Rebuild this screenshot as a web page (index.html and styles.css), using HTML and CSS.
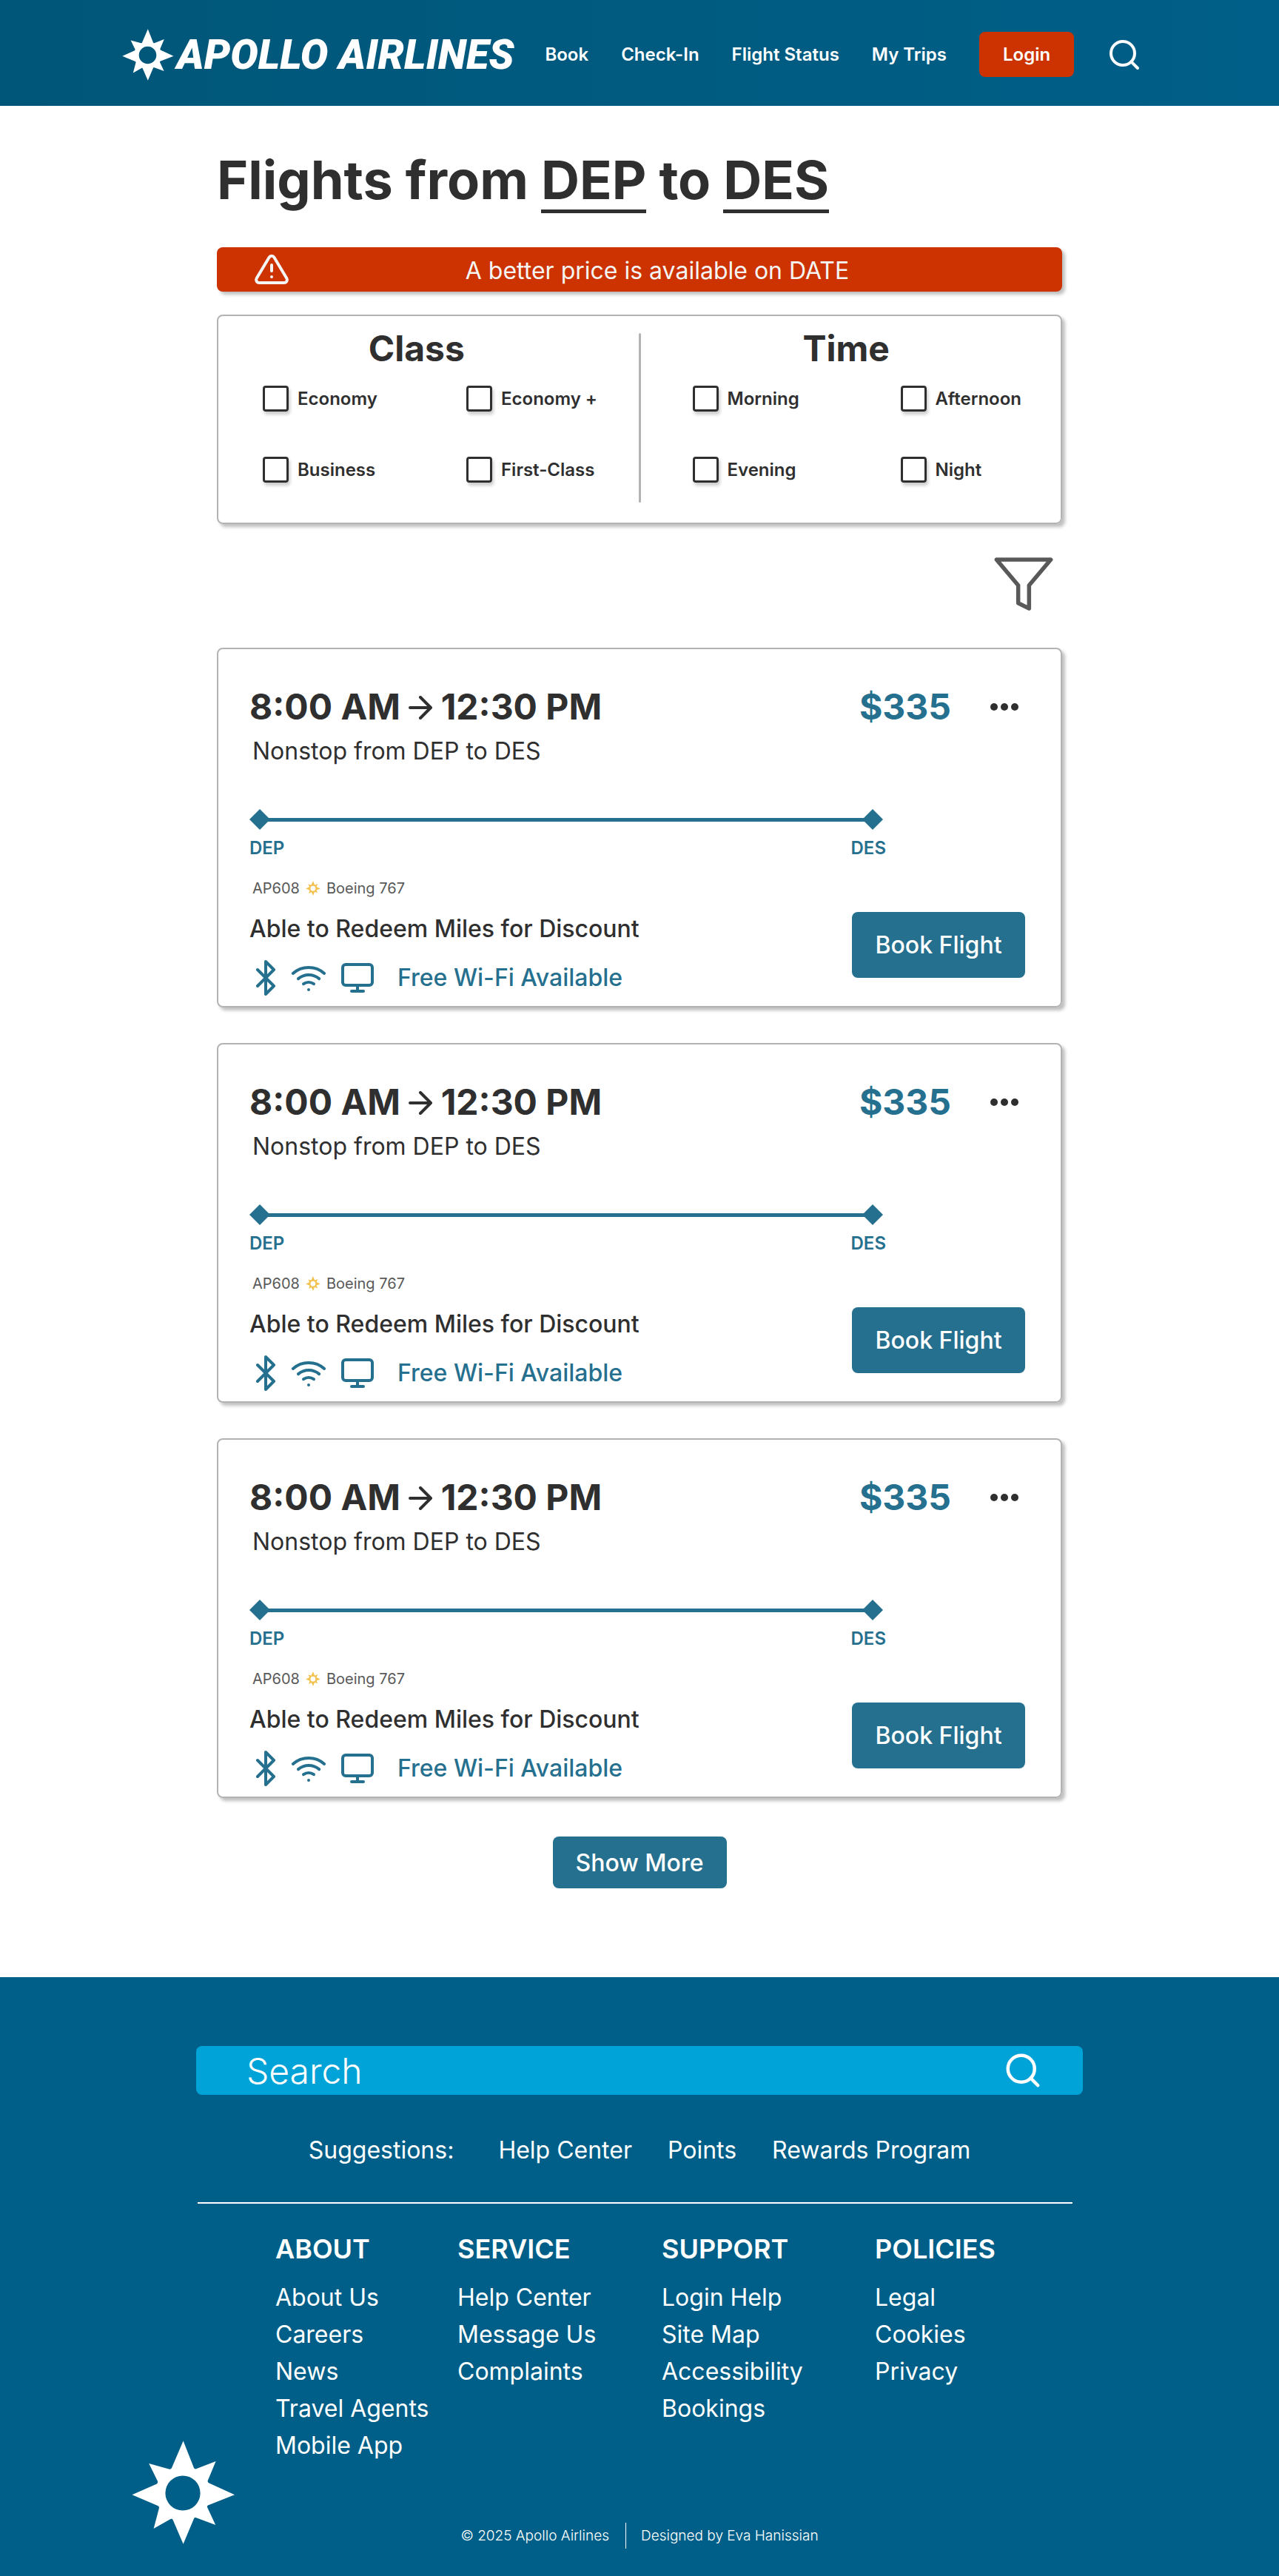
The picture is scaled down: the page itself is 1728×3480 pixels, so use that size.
FILE: index.html
```html
<!DOCTYPE html>
<html lang="en">

<head>
    <meta charset="UTF-8">
    <meta name="viewport" content="width=device-width, initial-scale=1.0">
    <title>Apollo Airlines - Flights</title>
    <link rel="stylesheet" href="styles.css">
</head>

<body>
    <!-- shared icons -->
    <svg class="sprite" aria-hidden="true">
        <symbol id="star" viewBox="0 0 140 140">
            <path fill="currentColor" fill-rule="evenodd" d="M69.6 0.5L84 37Q85 39 87 38.3L113.6 28L102.8 54Q102 56.5 104.5 57.5L139 73.3L103 87.5Q101.5 88.5 102 90L113.2 114L87 104.3Q85 103.5 84 105.5L69.6 139.7L55.5 107Q54.5 105 52.5 106L29.6 119L37 91Q37 89 35.5 88.2L0.5 73.3L34 58.5Q35.5 57 35 55L23.2 31L51 38.7Q53 39 54 37ZM69 47.4A23.6 23.6 0 1 0 69 94.6A23.6 23.6 0 1 0 69 47.4Z" />
        </symbol>
        <symbol id="search" viewBox="0 0 24 24">
            <circle cx="11" cy="11" r="8" />
            <path d="M21 21l-4.35-4.35" />
        </symbol>
        <symbol id="arrow" viewBox="4 4 16 16">
            <path d="M5 12h14M12 5l7 7-7 7" />
        </symbol>
        <symbol id="bluetooth" viewBox="5 0 14 24">
            <path d="M6.5 6.5l11 11L12 23V1l5.5 5.5-11 11" />
        </symbol>
        <symbol id="wifi" viewBox="0 0 24 24">
            <path d="M5 12.55a11 11 0 0 1 14.08 0M1.42 9a16 16 0 0 1 21.16 0M8.53 16.11a6 6 0 0 1 6.95 0M12 20h.01" />
        </symbol>
        <symbol id="monitor" viewBox="1 0 22 24">
            <rect x="2" y="3" width="20" height="14" rx="2" />
            <path d="M8 21h8M12 17v4" />
        </symbol>
    </svg>

    <header class="header">
        <a class="logo" href="#">
            <svg class="logo-star">
                <use href="#star" />
            </svg>
            <span>APOLLO AIRLINES</span>
        </a>
        <nav class="nav">
            <a href="#">Book</a>
            <a href="#">Check-In</a>
            <a href="#">Flight Status</a>
            <a href="#">My Trips</a>
            <button class="login" type="button">Login</button>
            <button class="icon-btn" type="button" aria-label="Search">
                <svg class="icon">
                    <use href="#search" />
                </svg>
            </button>
        </nav>
    </header>

    <main class="main">
        <h1 class="title">Flights from <span>DEP</span> to <span>DES</span></h1>

        <div class="alert">
            <svg class="icon" viewBox="0 0 24 24">
                <path d="M10.29 3.86L1.82 18a2 2 0 0 0 1.71 3h16.94a2 2 0 0 0 1.71-3L13.71 3.86a2 2 0 0 0-3.42 0zM12 9v4M12 17h.01" />
            </svg>
            <p>A better price is available on DATE</p>
        </div>

        <form class="filters">
            <section class="group class-group">
                <h2>Class</h2>
                <div class="options">
                    <label><input type="checkbox">Economy</label>
                    <label><input type="checkbox">Economy +</label>
                    <label><input type="checkbox">Business</label>
                    <label><input type="checkbox">First-Class</label>
                </div>
            </section>
            <div class="divider"></div>
            <section class="group time-group">
                <h2>Time</h2>
                <div class="options">
                    <label><input type="checkbox">Morning</label>
                    <label><input type="checkbox">Afternoon</label>
                    <label><input type="checkbox">Evening</label>
                    <label><input type="checkbox">Night</label>
                </div>
            </section>
        </form>

        <button class="icon-btn filter-btn" type="button" aria-label="Filter">
            <svg class="filter-icon" viewBox="0 0 24 24">
                <path d="M22 3H2l8 9.46V19l4 2v-8.54L22 3z" />
            </svg>
        </button>

        <div class="flights">
            <article class="flight">
                <div class="flight-head">
                    <h3 class="times">8:00 AM <svg class="arrow"><use href="#arrow" /></svg> 12:30 PM</h3>
                    <span class="price">$335</span>
                    <button class="more" type="button" aria-label="More options"><i></i><i></i><i></i></button>
                </div>
                <p class="stops">Nonstop from DEP to DES</p>
                <div class="route"></div>
                <div class="route-labels"><span>DEP</span><span>DES</span></div>
                <div class="plane">
                    <span>AP608</span>
                    <svg class="plane-star"><use href="#star" /></svg>
                    <span>Boeing 767</span>
                </div>
                <div class="flight-foot">
                    <div class="perks">
                        <p>Able to Redeem Miles for Discount</p>
                        <div class="amenities">
                            <svg class="icon bluetooth"><use href="#bluetooth" /></svg>
                            <svg class="icon"><use href="#wifi" /></svg>
                            <svg class="icon monitor"><use href="#monitor" /></svg>
                            <span>Free Wi-Fi Available</span>
                        </div>
                    </div>
                    <button class="btn book" type="button">Book Flight</button>
                </div>
            </article>

            <article class="flight">
                <div class="flight-head">
                    <h3 class="times">8:00 AM <svg class="arrow"><use href="#arrow" /></svg> 12:30 PM</h3>
                    <span class="price">$335</span>
                    <button class="more" type="button" aria-label="More options"><i></i><i></i><i></i></button>
                </div>
                <p class="stops">Nonstop from DEP to DES</p>
                <div class="route"></div>
                <div class="route-labels"><span>DEP</span><span>DES</span></div>
                <div class="plane">
                    <span>AP608</span>
                    <svg class="plane-star"><use href="#star" /></svg>
                    <span>Boeing 767</span>
                </div>
                <div class="flight-foot">
                    <div class="perks">
                        <p>Able to Redeem Miles for Discount</p>
                        <div class="amenities">
                            <svg class="icon bluetooth"><use href="#bluetooth" /></svg>
                            <svg class="icon"><use href="#wifi" /></svg>
                            <svg class="icon monitor"><use href="#monitor" /></svg>
                            <span>Free Wi-Fi Available</span>
                        </div>
                    </div>
                    <button class="btn book" type="button">Book Flight</button>
                </div>
            </article>

            <article class="flight">
                <div class="flight-head">
                    <h3 class="times">8:00 AM <svg class="arrow"><use href="#arrow" /></svg> 12:30 PM</h3>
                    <span class="price">$335</span>
                    <button class="more" type="button" aria-label="More options"><i></i><i></i><i></i></button>
                </div>
                <p class="stops">Nonstop from DEP to DES</p>
                <div class="route"></div>
                <div class="route-labels"><span>DEP</span><span>DES</span></div>
                <div class="plane">
                    <span>AP608</span>
                    <svg class="plane-star"><use href="#star" /></svg>
                    <span>Boeing 767</span>
                </div>
                <div class="flight-foot">
                    <div class="perks">
                        <p>Able to Redeem Miles for Discount</p>
                        <div class="amenities">
                            <svg class="icon bluetooth"><use href="#bluetooth" /></svg>
                            <svg class="icon"><use href="#wifi" /></svg>
                            <svg class="icon monitor"><use href="#monitor" /></svg>
                            <span>Free Wi-Fi Available</span>
                        </div>
                    </div>
                    <button class="btn book" type="button">Book Flight</button>
                </div>
            </article>
        </div>

        <button class="btn show-more" type="button">Show More</button>
    </main>

    <footer class="footer">
        <div class="footer-top">
            <form class="search">
                <input type="text" placeholder="Search" aria-label="Search">
                <button class="icon-btn" type="button" aria-label="Submit search">
                    <svg class="search-icon">
                        <use href="#search" />
                    </svg>
                </button>
            </form>
            <div class="suggestions">
                <span>Suggestions:</span>
                <a href="#">Help Center</a>
                <a href="#">Points</a>
                <a href="#">Rewards Program</a>
            </div>
            <hr>
        </div>
        <div class="footer-body">
            <svg class="footer-star">
                <use href="#star" />
            </svg>
            <div class="footer-content">
                <div class="links">
                    <div class="col">
                        <h4>ABOUT</h4>
                        <a href="#">About Us</a>
                        <a href="#">Careers</a>
                        <a href="#">News</a>
                        <a href="#">Travel Agents</a>
                        <a href="#">Mobile App</a>
                    </div>
                    <div class="col">
                        <h4>SERVICE</h4>
                        <a href="#">Help Center</a>
                        <a href="#">Message Us</a>
                        <a href="#">Complaints</a>
                    </div>
                    <div class="col">
                        <h4>SUPPORT</h4>
                        <a href="#">Login Help</a>
                        <a href="#">Site Map</a>
                        <a href="#">Accessibility</a>
                        <a href="#">Bookings</a>
                    </div>
                    <div class="col">
                        <h4>POLICIES</h4>
                        <a href="#">Legal</a>
                        <a href="#">Cookies</a>
                        <a href="#">Privacy</a>
                    </div>
                </div>
                <div class="copyright">
                    <span>© 2025 Apollo Airlines</span>
                    <span>Designed by Eva Hanissian</span>
                </div>
            </div>
        </div>
    </footer>
</body>

</html>
```
FILE: styles.css
```css
* {
    box-sizing: border-box;
}

body {
    margin: 0;
    font-family: Inter, "Liberation Sans", sans-serif;
    font-size: 32px;
    line-height: 38px;
    color: #2f2f2f;
    background-color: #fff;
}

h1,
h2,
h3,
h4,
p {
    margin: 0;
}

a {
    color: inherit;
    text-decoration: none;
}

button {
    border: none;
    padding: 0;
    font-family: inherit;
    color: inherit;
    cursor: pointer;
}

.sprite {
    display: none;
}

.icon,
.search-icon,
.arrow,
.filter-icon {
    width: 48px;
    height: 48px;
    fill: none;
    stroke: currentColor;
    stroke-width: 2;
    stroke-linecap: round;
    stroke-linejoin: round;
}

.icon-btn {
    display: flex;
    background: none;
}

/* header */
.header {
    display: flex;
    justify-content: center;
    align-items: center;
    gap: 42px;
    height: 143px;
    padding: 4px 20px 0 0;
    color: #fff;
    background: linear-gradient(90deg, #005678, #005f88);
}

.logo {
    display: flex;
    align-items: center;
    gap: 4px;
    font-family: Roboto, sans-serif;
    font-size: 56px;
    font-weight: 900;
    font-style: italic;
    white-space: nowrap;
}

.logo-star {
    width: 70px;
    height: 70px;
}

.nav {
    display: flex;
    align-items: center;
    gap: 44px;
    font-size: 24px;
    font-weight: 600;
    white-space: nowrap;
}

.login {
    height: 61px;
    padding: 0 32px;
    border-radius: 8px;
    font-size: 24px;
    font-weight: 600;
    background-color: #cc3300;
}

/* main */
.main {
    display: flex;
    flex-direction: column;
    max-width: 1142px;
    margin: 0 auto;
    padding: 60px 0 120px;
}

.title {
    font-size: 72px;
    line-height: 80px;
    font-weight: 700;
    margin-bottom: 46px;
}

.title span {
    display: inline-block;
    border-bottom: 5px solid #2f2f2f;
}

.alert {
    display: flex;
    align-items: center;
    height: 60px;
    padding: 0 50px;
    margin-bottom: 31px;
    border-radius: 8px;
    color: #f5f5f5;
    background-color: #cc3300;
    box-shadow: 4px 4px 4px rgba(0, 0, 0, 0.25);
}

.alert p {
    flex: 1;
    padding-top: 4px;
    text-align: center;
}

.filters {
    display: grid;
    grid-template-columns: minmax(0, 1fr) 3px minmax(0, 1fr);
    border: 2px solid #b3b3b3;
    border-radius: 8px;
    box-shadow: 4px 4px 4px rgba(0, 0, 0, 0.25);
}

.group {
    padding: 15px 32px 54px 0;
}

.time-group {
    padding-right: 12px;
}

.group h2 {
    margin-bottom: 21px;
    font-size: 48px;
    line-height: 58px;
    text-align: center;
}

.options {
    display: grid;
    grid-template-columns: 275px auto;
    row-gap: 61px;
    padding-left: 60px;
}

.time-group .options {
    grid-template-columns: 281px auto;
    padding-left: 70px;
}

.options label {
    display: flex;
    align-items: center;
    gap: 12px;
    font-size: 24px;
    line-height: 35px;
    font-weight: 600;
    white-space: nowrap;
}

.options input {
    appearance: none;
    width: 35px;
    height: 35px;
    margin: 0;
    border: 3px solid #2f2f2f;
    border-radius: 4px;
    box-shadow: 2px 4px 4px rgba(0, 0, 0, 0.2);
}

.options input:checked {
    background-color: #26708f;
}

.divider {
    margin: 23px 0 27px;
    border-radius: 2px;
    background-color: #b3b3b3;
}

.filter-btn {
    align-self: flex-end;
    margin: 37px 8px 42px 0;
    color: #595959;
}

.filter-icon {
    width: 88px;
    height: 88px;
    stroke-width: 1.5;
}

/* flight cards */
.flights {
    display: flex;
    flex-direction: column;
    gap: 48px;
}

.flight {
    padding: 49px 48px 14px 42px;
    border: 2px solid #b3b3b3;
    border-radius: 8px;
    box-shadow: 4px 4px 4px rgba(0, 0, 0, 0.25);
}

.flight-head {
    display: flex;
    align-items: center;
    font-size: 48px;
    line-height: 58px;
    font-weight: 700;
}

.times {
    flex: 1;
    font-size: inherit;
}

.arrow {
    width: 32px;
    height: 32px;
}

.price {
    margin-right: 44px;
    color: #26708f;
}

.more {
    display: flex;
    justify-content: center;
    gap: 4px;
    width: 56px;
    background: none;
}

.more i {
    width: 10px;
    height: 10px;
    border-radius: 50%;
    background-color: #2f2f2f;
}

.stops {
    margin-top: 12px;
    padding-left: 4px;
}

/* line with a diamond on each end */
.route {
    display: flex;
    align-items: center;
    justify-content: space-between;
    height: 30px;
    margin: 58px 192px 9px 0;
    background: linear-gradient(#26708f, #26708f) center / calc(100% - 20px) 5px no-repeat;
}

.route::before,
.route::after {
    content: "";
    width: 28px;
    height: 28px;
    background-color: #26708f;
    clip-path: polygon(50% 0, 100% 50%, 50% 100%, 0 50%);
}

.route-labels {
    display: flex;
    justify-content: space-between;
    margin-right: 188px;
    font-size: 24px;
    line-height: 29px;
    font-weight: 600;
    color: #26708f;
}

.plane {
    display: flex;
    align-items: center;
    gap: 8px;
    margin-top: 28px;
    padding-left: 4px;
    font-size: 20px;
    line-height: 24px;
    color: #595959;
}

.plane-star {
    width: 20px;
    height: 20px;
    color: #f2c14e;
}

.flight-foot {
    display: flex;
    justify-content: space-between;
    align-items: flex-start;
    margin-top: 20px;
    font-weight: 500;
}

.perks {
    padding-top: 4px;
}

.amenities {
    display: flex;
    align-items: center;
    gap: 20px;
    margin-top: 23px;
    padding-left: 8px;
    color: #26708f;
}

.amenities span {
    margin-left: 12px;
}

.amenities .bluetooth {
    width: 28px;
}

.amenities .monitor {
    width: 44px;
}

.btn {
    border-radius: 8px;
    font-size: 32px;
    font-weight: 500;
    color: #fff;
    background-color: #26708f;
}

.book {
    width: 234px;
    height: 89px;
}

.show-more {
    align-self: center;
    width: 235px;
    height: 70px;
    margin-top: 52px;
}

/* footer */
.footer {
    padding: 93px 0 37px;
    color: #fff;
    background-color: #005f88;
}

.footer-top {
    max-width: 1198px;
    margin: 0 auto;
}

.search {
    display: flex;
    align-items: center;
    height: 66px;
    padding: 0 54px 0 68px;
    border-radius: 8px;
    background-color: #00a3d7;
}

.search input {
    flex: 1;
    border: none;
    padding: 0;
    font-family: inherit;
    font-size: 48px;
    font-weight: 300;
    color: #fff;
    background: none;
    outline: none;
}

.search input::placeholder {
    color: #fff;
    opacity: 1;
}

.search-icon {
    width: 54px;
    height: 54px;
}

.suggestions {
    display: flex;
    justify-content: center;
    gap: 48px;
    margin: 56px 0 51px;
}

.suggestions span {
    margin-right: 12px;
}

.footer hr {
    height: 2px;
    margin: 0 14px 0 2px;
    border: none;
    background-color: #fff;
}

.footer-body {
    display: grid;
    grid-template-columns: 140px minmax(0, 984px) 140px;
    justify-content: center;
    gap: 54px;
    margin-top: 39px;
}

.footer-star {
    align-self: end;
    width: 140px;
    height: 140px;
    margin-bottom: 6px;
}

.links {
    display: grid;
    grid-template-columns: 246px 276px 288px auto;
}

.col {
    display: flex;
    flex-direction: column;
    line-height: 50px;
}

.col h4 {
    margin-bottom: 19px;
    font-size: 36px;
    line-height: 44px;
    font-weight: 600;
}

.copyright {
    display: flex;
    justify-content: center;
    margin-top: 79px;
    font-size: 19px;
    line-height: 35px;
    font-weight: 300;
}

.copyright span + span {
    margin-left: 22px;
    padding-left: 20px;
    border-left: 1px solid #fff;
}
```
